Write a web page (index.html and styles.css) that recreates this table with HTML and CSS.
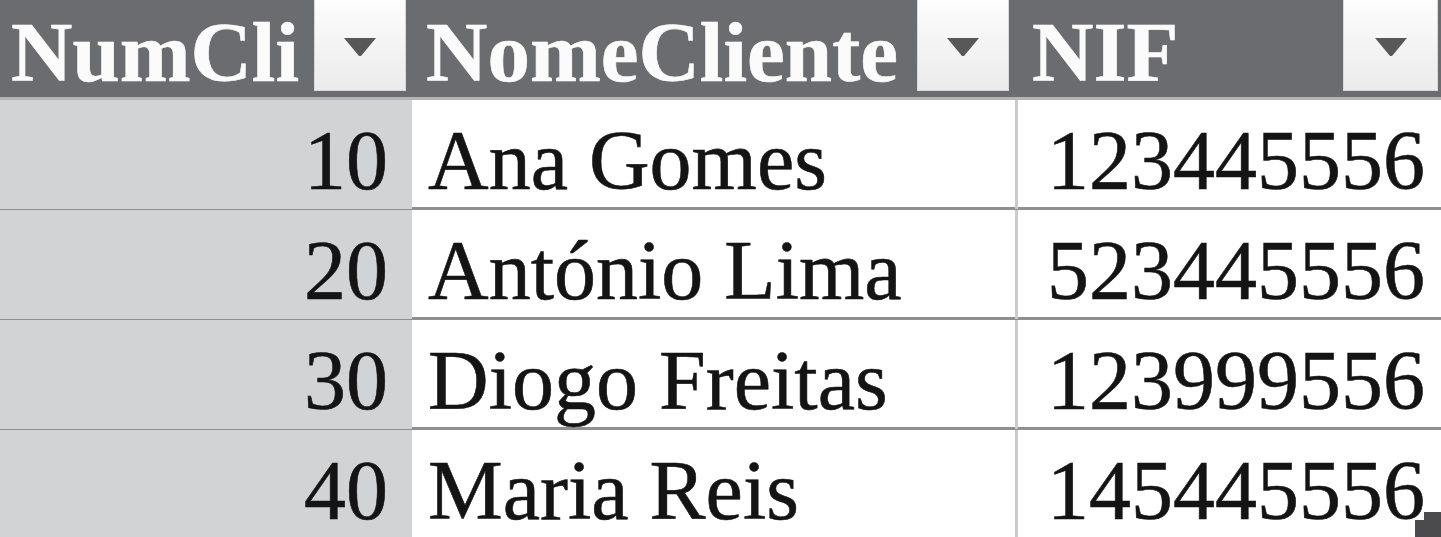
FILE: index.html
```html
<!DOCTYPE html>
<html lang="pt">
<head>
<meta charset="utf-8">
<title>Clientes</title>
<link rel="stylesheet" href="styles.css">
</head>
<body>
<div class="table">
  <div class="row head">
    <div class="hcell h1"><span class="htext">NumCli</span><span class="drop"><svg width="34" height="20" viewBox="0 0 34 20"><path d="M1 1 L33 1 L18 19 L16 19 Z" fill="#58585b"/></svg></span></div>
    <div class="hcell h2"><span class="htext">NomeCliente</span><span class="drop"><svg width="34" height="20" viewBox="0 0 34 20"><path d="M1 1 L33 1 L18 19 L16 19 Z" fill="#58585b"/></svg></span></div>
    <div class="hcell h3"><span class="htext">NIF</span><span class="drop drop-last"><svg width="34" height="20" viewBox="0 0 34 20"><path d="M1 1 L33 1 L18 19 L16 19 Z" fill="#58585b"/></svg></span></div>
  </div>
  <div class="row">
    <div class="cell num">10</div>
    <div class="cell name">Ana Gomes</div>
    <div class="cell nif">123445556</div>
  </div>
  <div class="row">
    <div class="cell num">20</div>
    <div class="cell name">António Lima</div>
    <div class="cell nif">523445556</div>
  </div>
  <div class="row">
    <div class="cell num">30</div>
    <div class="cell name">Diogo Freitas</div>
    <div class="cell nif">123999556</div>
  </div>
  <div class="row">
    <div class="cell num">40</div>
    <div class="cell name">Maria Reis</div>
    <div class="cell nif">145445556</div>
  </div>
  <svg class="handle" width="26" height="25" viewBox="0 0 26 25"><path d="M9 0 L26 0 L26 25 L0 25 L0 8 L9 8 Z" fill="#4b4b4e"/></svg>
</div>
</body>
</html>
```

FILE: styles.css
```css
html, body {
  margin: 0;
  padding: 0;
  background: #ffffff;
}

body {
  overflow: hidden;
}

.table {
  position: relative;
  width: 1441px;
  height: 537px;
  overflow: hidden;
  font-family: "Liberation Serif", "Times New Roman", serif;
}

.row {
  display: grid;
  grid-template-columns: 412px 603px 1fr;
  height: 107px;
  border-bottom: 3px solid #8e8f92;
}

.row.head {
  height: 97px;
  background: #6b6c70;
  border-bottom: 3px solid #b4b5b8;
}

.hcell {
  display: flex;
  align-items: flex-start;
  min-width: 0;
}

.htext {
  font-weight: bold;
  font-size: 85px;
  color: #fbfbfb;
  padding-top: 3px;
  white-space: nowrap;
  -webkit-text-stroke: 0.6px #fbfbfb;
}

.h1 .htext { padding-left: 11px; }
.h2 .htext { padding-left: 14px; }
.h3 .htext { padding-left: 17px; }

.drop {
  margin-left: auto;
  margin-right: 6px;
  width: 92px;
  height: 91px;
  box-sizing: border-box;
  border: 1px solid #d9d9db;
  border-top: none;
  background: linear-gradient(#fdfdfd, #ebebec);
  display: flex;
  justify-content: center;
  align-items: flex-start;
  padding-top: 37px;
}

.drop-last {
  margin-right: 3px;
  width: 95px;
}

.cell {
  font-size: 84px;
  color: #141415;
  padding-top: 12px;
  white-space: nowrap;
  -webkit-text-stroke: 0.6px #141415;
}

.num {
  background: #d2d3d5;
  text-align: right;
  padding-right: 24px;
}

.name {
  padding-left: 16px;
}

.nif {
  text-align: right;
  padding-right: 16px;
  border-left: 3px solid #cacbcd;
}

.handle {
  position: absolute;
  right: 0;
  bottom: 0;
}
```
